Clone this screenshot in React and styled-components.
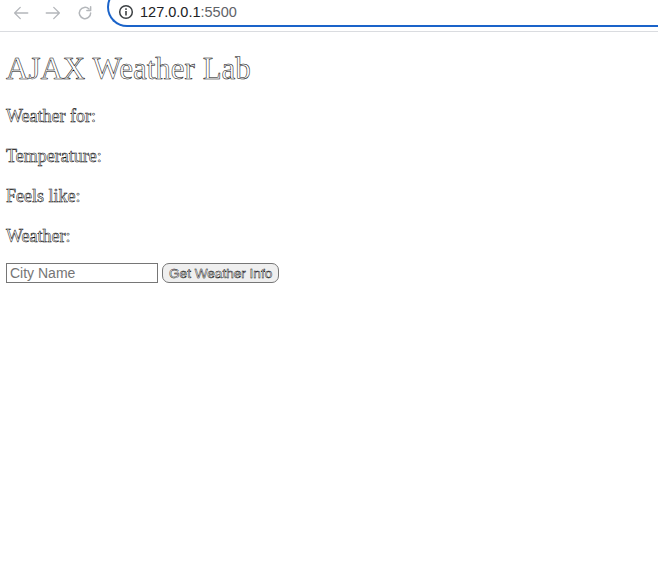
import React from "react";
import styled, { createGlobalStyle } from "styled-components";

const Global = createGlobalStyle`
  html, body { margin: 0; padding: 0; background: #fff; }
  body { font-family: "Liberation Serif", "Times New Roman", serif; overflow: hidden; }
`;

const Chrome = styled.div`
  height: 31px;
  border-bottom: 1px solid #dadce0;
  display: flex;
  align-items: flex-end;
  overflow: hidden;
`;

const NavGroup = styled.div`
  display: flex;
  align-items: center;
  gap: 14px;
  padding: 0 0 5px 12px;
  height: 26px;
`;

const NavIcon = styled.svg`
  width: 18px;
  height: 18px;
  color: #b4b7bb;
  flex: none;
`;

const Omnibox = styled.div`
  flex: 1;
  margin-left: 13px;
  margin-bottom: 4px;
  height: 40px;
  border: 2px solid #1a63c9;
  border-right: none;
  border-radius: 20px 0 0 20px;
  display: flex;
  align-items: flex-end;
  padding: 0 0 5px 9px;
  box-sizing: border-box;
  gap: 6px;
`;

const Url = styled.span`
  font-family: "Liberation Sans", Arial, sans-serif;
  font-size: 14.5px;
  color: #202124;
  line-height: 16px;
`;

const Port = styled.span`
  color: #5f6368;
`;

const Page = styled.main`
  padding: 0 6px;
`;

const Outline = `
  color: #fff;
  -webkit-text-stroke: 0.5px #000;
`;

const Title = styled.h1`
  font-family: "Liberation Serif", "Times New Roman", serif;
  font-weight: normal;
  font-size: 31px;
  margin: 18px 0 0;
  line-height: 37px;
  ${Outline}
`;

const Line = styled.p`
  font-size: 18px;
  line-height: 21px;
  margin: 19px 0 0;
  ${Outline}
`;

const Form = styled.div`
  display: flex;
  align-items: center;
  gap: 4px;
  margin-top: 16px;
`;

const CityInput = styled.input`
  width: 152px;
  height: 20px;
  box-sizing: border-box;
  border: 1px solid #767676;
  font-family: "Liberation Sans", Arial, sans-serif;
  font-size: 14px;
  padding: 0 3px;
  &::placeholder { color: #757575; }
`;

const Button = styled.button`
  height: 20px;
  box-sizing: border-box;
  border: 1px solid #767676;
  border-radius: 7px;
  background: #efefef;
  font-family: "Liberation Sans", Arial, sans-serif;
  font-size: 13.6px;
  padding: 0 6px;
  color: #fff;
  -webkit-text-stroke: 0.45px #000;
`;

export default function App() {
  return (
    <>
      <Global />
      <Chrome>
        <NavGroup>
          <NavIcon viewBox="0 0 24 24" fill="none" stroke="currentColor" strokeWidth="1.8" strokeLinecap="round" strokeLinejoin="round">
            <path d="M21 12H3.5M11 4.5 3.5 12l7.5 7.5" />
          </NavIcon>
          <NavIcon viewBox="0 0 24 24" fill="none" stroke="currentColor" strokeWidth="1.8" strokeLinecap="round" strokeLinejoin="round">
            <path d="M3 12h17.5M13 4.5l7.5 7.5-7.5 7.5" />
          </NavIcon>
          <NavIcon viewBox="0 0 24 24" fill="none" stroke="currentColor" strokeWidth="2" strokeLinecap="round">
            <path d="M19.5 12a7.5 7.5 0 1 1-2.2-5.3" />
            <path d="M19.5 3.5v5h-5" strokeLinejoin="round" />
          </NavIcon>
        </NavGroup>
        <Omnibox>
          <svg width="16" height="16" viewBox="0 0 16 16">
            <circle cx="8" cy="8" r="6.3" fill="none" stroke="#3c4043" strokeWidth="1.5" />
            <rect x="7.2" y="7" width="1.6" height="4.5" fill="#3c4043" />
            <rect x="7.2" y="4.3" width="1.6" height="1.6" fill="#3c4043" />
          </svg>
          <Url>127.0.0.1<Port>:5500</Port></Url>
        </Omnibox>
      </Chrome>
      <Page>
        <Title>AJAX Weather Lab</Title>
        <Line>Weather for:</Line>
        <Line>Temperature:</Line>
        <Line>Feels like:</Line>
        <Line>Weather:</Line>
        <Form>
          <CityInput placeholder="City Name" />
          <Button>Get Weather Info</Button>
        </Form>
      </Page>
    </>
  );
}
